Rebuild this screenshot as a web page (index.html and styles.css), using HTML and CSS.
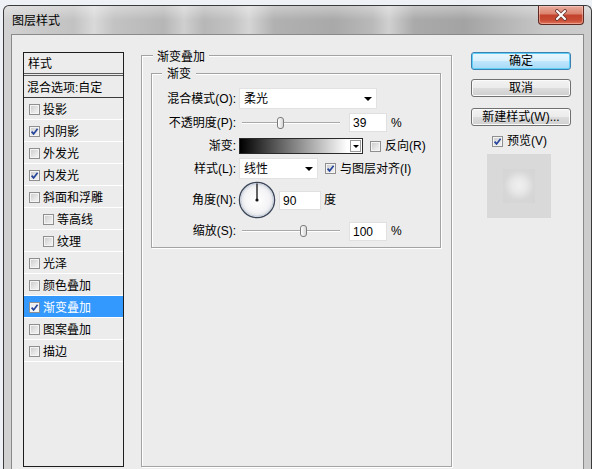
FILE: index.html
```html
<!DOCTYPE html>
<html lang="zh-CN">
<head>
<meta charset="utf-8">
<title>图层样式</title>
<link rel="stylesheet" href="styles.css">
</head>
<body>
<div class="window">
  <div class="titlebar">
    <span class="title">图层样式</span>
    <button class="close" aria-label="关闭"><svg width="14" height="12" viewBox="0 0 14 12"><path d="M3 2 L11 10 M11 2 L3 10" stroke="#6b3a33" stroke-width="3.8" stroke-linecap="round" fill="none"/><path d="M3 2 L11 10 M11 2 L3 10" stroke="#ffffff" stroke-width="2.1" stroke-linecap="round" fill="none"/></svg></button>
  </div>
  <div class="client">
    <div class="stylelist">
      <div class="list-head">样式</div>
      <div class="list-blend">混合选项:自定</div>
      <div class="item"><span class="cb"></span>投影</div>
      <div class="item"><span class="cb"><svg class="tick" viewBox="0 0 9 9"><path d="M1.6 4.6 L3.6 6.9 L7.6 1.8"/></svg></span>内阴影</div>
      <div class="item"><span class="cb"></span>外发光</div>
      <div class="item"><span class="cb"><svg class="tick" viewBox="0 0 9 9"><path d="M1.6 4.6 L3.6 6.9 L7.6 1.8"/></svg></span>内发光</div>
      <div class="item"><span class="cb"></span>斜面和浮雕</div>
      <div class="item sub"><span class="cb"></span>等高线</div>
      <div class="item sub"><span class="cb"></span>纹理</div>
      <div class="item"><span class="cb"></span>光泽</div>
      <div class="item"><span class="cb"></span>颜色叠加</div>
      <div class="item selected"><span class="cb"><svg class="tick" viewBox="0 0 9 9"><path d="M1.6 4.6 L3.6 6.9 L7.6 1.8"/></svg></span>渐变叠加</div>
      <div class="item"><span class="cb"></span>图案叠加</div>
      <div class="item"><span class="cb"></span>描边</div>
    </div>

    <fieldset class="group outer">
      <legend>渐变叠加</legend>
      <fieldset class="group inner">
        <legend>渐变</legend>
        <div class="row r1">
          <span class="lbl">混合模式(O):</span>
          <div class="select sel-blend"><span>柔光</span><i class="arrow"></i></div>
        </div>
        <div class="row r2">
          <span class="lbl">不透明度(P):</span>
          <div class="slider"><span class="track"></span><span class="thumb" style="left:39%"></span></div>
          <span class="field num">39</span>
          <span class="unit">%</span>
        </div>
        <div class="row r3">
          <span class="lbl">渐变:</span>
          <div class="gradbar"><span class="gradbtn"><i class="arrow small"></i></span></div>
          <span class="cb opt"></span><span class="cbtext">反向(R)</span>
        </div>
        <div class="row r4">
          <span class="lbl">样式(L):</span>
          <div class="select sel-style"><span>线性</span><i class="arrow"></i></div>
          <span class="cb opt"><svg class="tick" viewBox="0 0 9 9"><path d="M1.6 4.6 L3.6 6.9 L7.6 1.8"/></svg></span><span class="cbtext">与图层对齐(I)</span>
        </div>
        <div class="row r5">
          <span class="lbl">角度(N):</span>
          <svg class="dial" width="38" height="38" viewBox="0 0 38 38">
            <defs>
              <radialGradient id="dialfill" cx="50%" cy="50%" r="50%">
                <stop offset="0%" stop-color="#ffffff"/>
                <stop offset="70%" stop-color="#f4f4f6"/>
                <stop offset="100%" stop-color="#d9dde3"/>
              </radialGradient>
            </defs>
            <circle cx="19" cy="19" r="17.6" fill="url(#dialfill)" stroke="#3b4658" stroke-width="1.3"/>
            <circle cx="19" cy="19" r="16.3" fill="none" stroke="#c9d1dc" stroke-width="1"/>
            <line x1="19" y1="19" x2="19" y2="2.5" stroke="#111" stroke-width="1.3"/>
            <circle cx="19" cy="19" r="1.6" fill="#111"/>
          </svg>
          <span class="field angle">90</span>
          <span class="unit deg">度</span>
        </div>
        <div class="row r6">
          <span class="lbl">缩放(S):</span>
          <div class="slider"><span class="track"></span><span class="thumb" style="left:62%"></span></div>
          <span class="field num">100</span>
          <span class="unit">%</span>
        </div>
      </fieldset>
    </fieldset>

    <div class="actions">
      <button class="btn default">确定</button>
      <button class="btn cancel">取消</button>
      <button class="btn newstyle">新建样式(W)...</button>
      <div class="preview-check"><span class="cb"><svg class="tick" viewBox="0 0 9 9"><path d="M1.6 4.6 L3.6 6.9 L7.6 1.8"/></svg></span><span>预览(V)</span></div>
      <div class="swatch"><div class="swatch-inner"></div></div>
    </div>
  </div>
</div>
</body>
</html>
```

FILE: styles.css
```css
* { box-sizing: border-box; }

html, body {
  margin: 0;
  height: 469px;
  overflow: hidden;
  background: #eef2f7;
  font-family: "Liberation Sans", "Noto Sans CJK SC", sans-serif;
  font-size: 12px;
  line-height: 14px;
  color: #000;
}

.window {
  margin: 5px 0 0 3px;
  width: 589px;
  height: 470px;
  border: 1px solid #3a3a3a;
  border-bottom: none;
  border-radius: 6px 6px 0 0;
  padding: 0 7px;
  display: flex;
  flex-direction: column;
  background:
    linear-gradient(to bottom, rgba(255,255,255,0.35), rgba(255,255,255,0) 14px),
    linear-gradient(to right, #d2d2d2 0px, #c8c8c8 40px, #c2c2c2 70px, #d9d9d9 90px, #c3c3c3 110px, #b6b6b6 160px, #cfcfcf 180px, #b7b7b7 200px, #c2c2c2 228px, #d5d5d5 245px, #b1b1b1 270px, #a9a9a9 330px, #b9b9b9 368px, #d0d0d0 385px, #aaaaaa 410px, #a3a3a3 460px, #b5b5b5 500px, #c7c7c7 540px, #cdcdcd 589px);
}

.titlebar {
  height: 28px;
  flex: none;
  display: flex;
  justify-content: space-between;
  align-items: flex-start;
  padding-left: 1px;
}

.title {
  margin-top: 8px;
  line-height: 14px;
}

.close {
  width: 46px;
  height: 19px;
  margin: 0;
  padding: 0;
  border: 1px solid #5e2a22;
  border-top: none;
  border-radius: 0 0 4px 4px;
  background: linear-gradient(to bottom, #e9ab9d 0%, #dc8470 42%, #c3432d 52%, #c84b34 78%, #e07258 100%);
  box-shadow: inset 0 0 0 1px rgba(255,220,210,0.45);
  display: flex;
  align-items: center;
  justify-content: center;
}

.client {
  flex: 1;
  border: 1px solid #8a8a8a;
  border-bottom: none;
  background: #ececec;
  display: flex;
  align-items: flex-start;
  padding: 17px 12px 0 11px;
}

/* ---------- style list ---------- */
.stylelist {
  flex: none;
  width: 101px;
  height: 415px;
  border: 1px solid #1e1e1e;
  display: flex;
  flex-direction: column;
}

.list-head {
  height: 23px;
  padding: 2px 0 0 4px;
  display: flex;
  align-items: center;
  border-bottom: 3px double #5b5b5b;
}

.list-blend {
  height: 22px;
  padding: 2px 0 0 3px;
  display: flex;
  align-items: center;
  border-bottom: 1px solid #3a3a3a;
}

.item {
  height: 22px;
  padding: 2px 0 0 5px;
  display: flex;
  align-items: center;
  gap: 3px;
  border-bottom: 1px solid #ffffff;
}

.item.sub { padding-left: 19px; }

.item.selected {
  background: #3399ff;
  color: #fff;
}

.cb {
  flex: none;
  width: 11px;
  height: 11px;
  border: 1px solid #8f8f8f;
  background: linear-gradient(135deg, #c9c9c9 0%, #e4e4e4 55%, #f7f7f7 100%);
  box-shadow: inset 0 0 0 1px #f4f4f4;
  display: flex;
  align-items: center;
  justify-content: center;
}

.item.selected .cb {
  background: linear-gradient(135deg, #e6e6e6, #ffffff);
}

.tick {
  width: 9px;
  height: 9px;
  fill: none;
  stroke: #24449c;
  stroke-width: 1.7;
}

/* ---------- group boxes ---------- */
.group {
  margin: 0;
  min-width: 0;
  border: 1px solid #a3a3a3;
  box-shadow: inset 1px 1px #ffffff, 1px 1px #ffffff;
}

.group > legend {
  background: #ececec;
  line-height: 14px;
}

.outer {
  flex: none;
  width: 311px;
  height: 421px;
  margin: -6px 0 0 17px;
  padding: 0 10px 0 9px;
}

.outer > legend {
  margin-left: 2px;
  padding: 4px 4px 0;
}

.inner {
  margin-top: 1px;
  padding: 7px 0 6px 0;
  display: flex;
  flex-direction: column;
  gap: 2px;
}

.inner > legend {
  margin-left: 10px;
  padding: 2px 5px 0;
}

.row {
  display: flex;
  align-items: center;
}

.r1 { height: 21px; }
.r2 { height: 23px; }
.r3 { height: 20px; }
.r4 { height: 21px; }
.r5 { height: 38px; }
.r6 { height: 20px; }

.lbl {
  flex: none;
  width: 84px;
  margin-right: 3px;
  text-align: right;
  white-space: nowrap;
}

.select {
  flex: none;
  height: 21px;
  background: #fff;
  border: 1px solid #e2e2e2;
  display: flex;
  align-items: center;
  justify-content: space-between;
  padding: 1px 4px 0 4px;
}

.sel-blend { width: 138px; }
.sel-style { width: 79px; }

.arrow {
  width: 0;
  height: 0;
  border-left: 4px solid transparent;
  border-right: 4px solid transparent;
  border-top: 4px solid #000;
}

.arrow.small {
  border-left-width: 3px;
  border-right-width: 3px;
  border-top-width: 3px;
}

.slider {
  flex: none;
  position: relative;
  width: 98px;
  height: 14px;
  margin-left: 3px;
  display: flex;
  align-items: center;
}

.track {
  width: 100%;
  height: 2px;
  border-top: 1px solid #a9a9a9;
  border-bottom: 1px solid #ffffff;
}

.thumb {
  position: absolute;
  top: 1px;
  width: 7px;
  height: 12px;
  margin-left: -3px;
  border: 1px solid #7c7c7c;
  border-radius: 3px 3px 3px 3px;
  background: linear-gradient(to right, #ffffff, #d6d6d6);
}

.field {
  flex: none;
  height: 19px;
  background: #fff;
  border: 1px solid #e0e0e0;
  padding: 2px 0 0 3px;
}

.num {
  width: 38px;
  margin-left: 9px;
}

.angle {
  width: 42px;
  margin-left: 3px;
}

.unit { margin-left: 4px; }
.unit.deg { margin-left: 3px; }

.gradbar {
  flex: none;
  width: 124px;
  height: 16px;
  border: 1px solid #2a2a2a;
  background: linear-gradient(to right, #000000 0%, #5a5a5a 30%, #bdbdbd 65%, #ffffff 88%);
  display: flex;
  justify-content: flex-end;
  align-items: center;
  padding-right: 1px;
}

.gradbtn {
  width: 11px;
  height: 12px;
  background: #fff;
  border: 1px solid #9a9a9a;
  display: flex;
  align-items: center;
  justify-content: center;
}

.cb.opt { margin-left: 7px; }
.cbtext { margin-left: 4px; white-space: nowrap; }

.dial {
  flex: none;
  margin-left: -1px;
}

/* ---------- buttons column ---------- */
.actions {
  flex: none;
  width: 100px;
  margin-left: 19px;
  display: flex;
  flex-direction: column;
}

.btn {
  height: 18px;
  margin: 0;
  padding: 0;
  font: inherit;
  line-height: 14px;
  color: #000;
  border: 1px solid #707070;
  border-radius: 3px;
  background: linear-gradient(to bottom, #f3f3f3 0%, #ebebeb 48%, #dcdcdc 52%, #cfcfcf 100%);
  box-shadow: inset 0 0 0 1px #fbfbfb;
}

.btn.default {
  border-color: #3c7fb1;
  background: linear-gradient(to bottom, #eaf6fd 0%, #d9f0fc 48%, #bee6fd 52%, #a7d9f5 100%);
  box-shadow: inset 0 0 0 1px #5fd0f7;
}

.btn.cancel { margin-top: 9px; }
.btn.newstyle { margin-top: 11px; }

.preview-check {
  margin: 8px 0 0 21px;
  height: 14px;
  display: flex;
  align-items: center;
  gap: 4px;
}

.swatch {
  margin: 6px 0 0 16px;
  width: 64px;
  height: 64px;
  background: #d9d9d9;
  display: flex;
  align-items: center;
  justify-content: center;
}

.swatch-inner {
  width: 32px;
  height: 34px;
  background: radial-gradient(circle at 50% 48%, #f0f0f0 0%, #e8e8e8 30%, #d7d7d7 62%, #d4d4d4 100%);
}
```
